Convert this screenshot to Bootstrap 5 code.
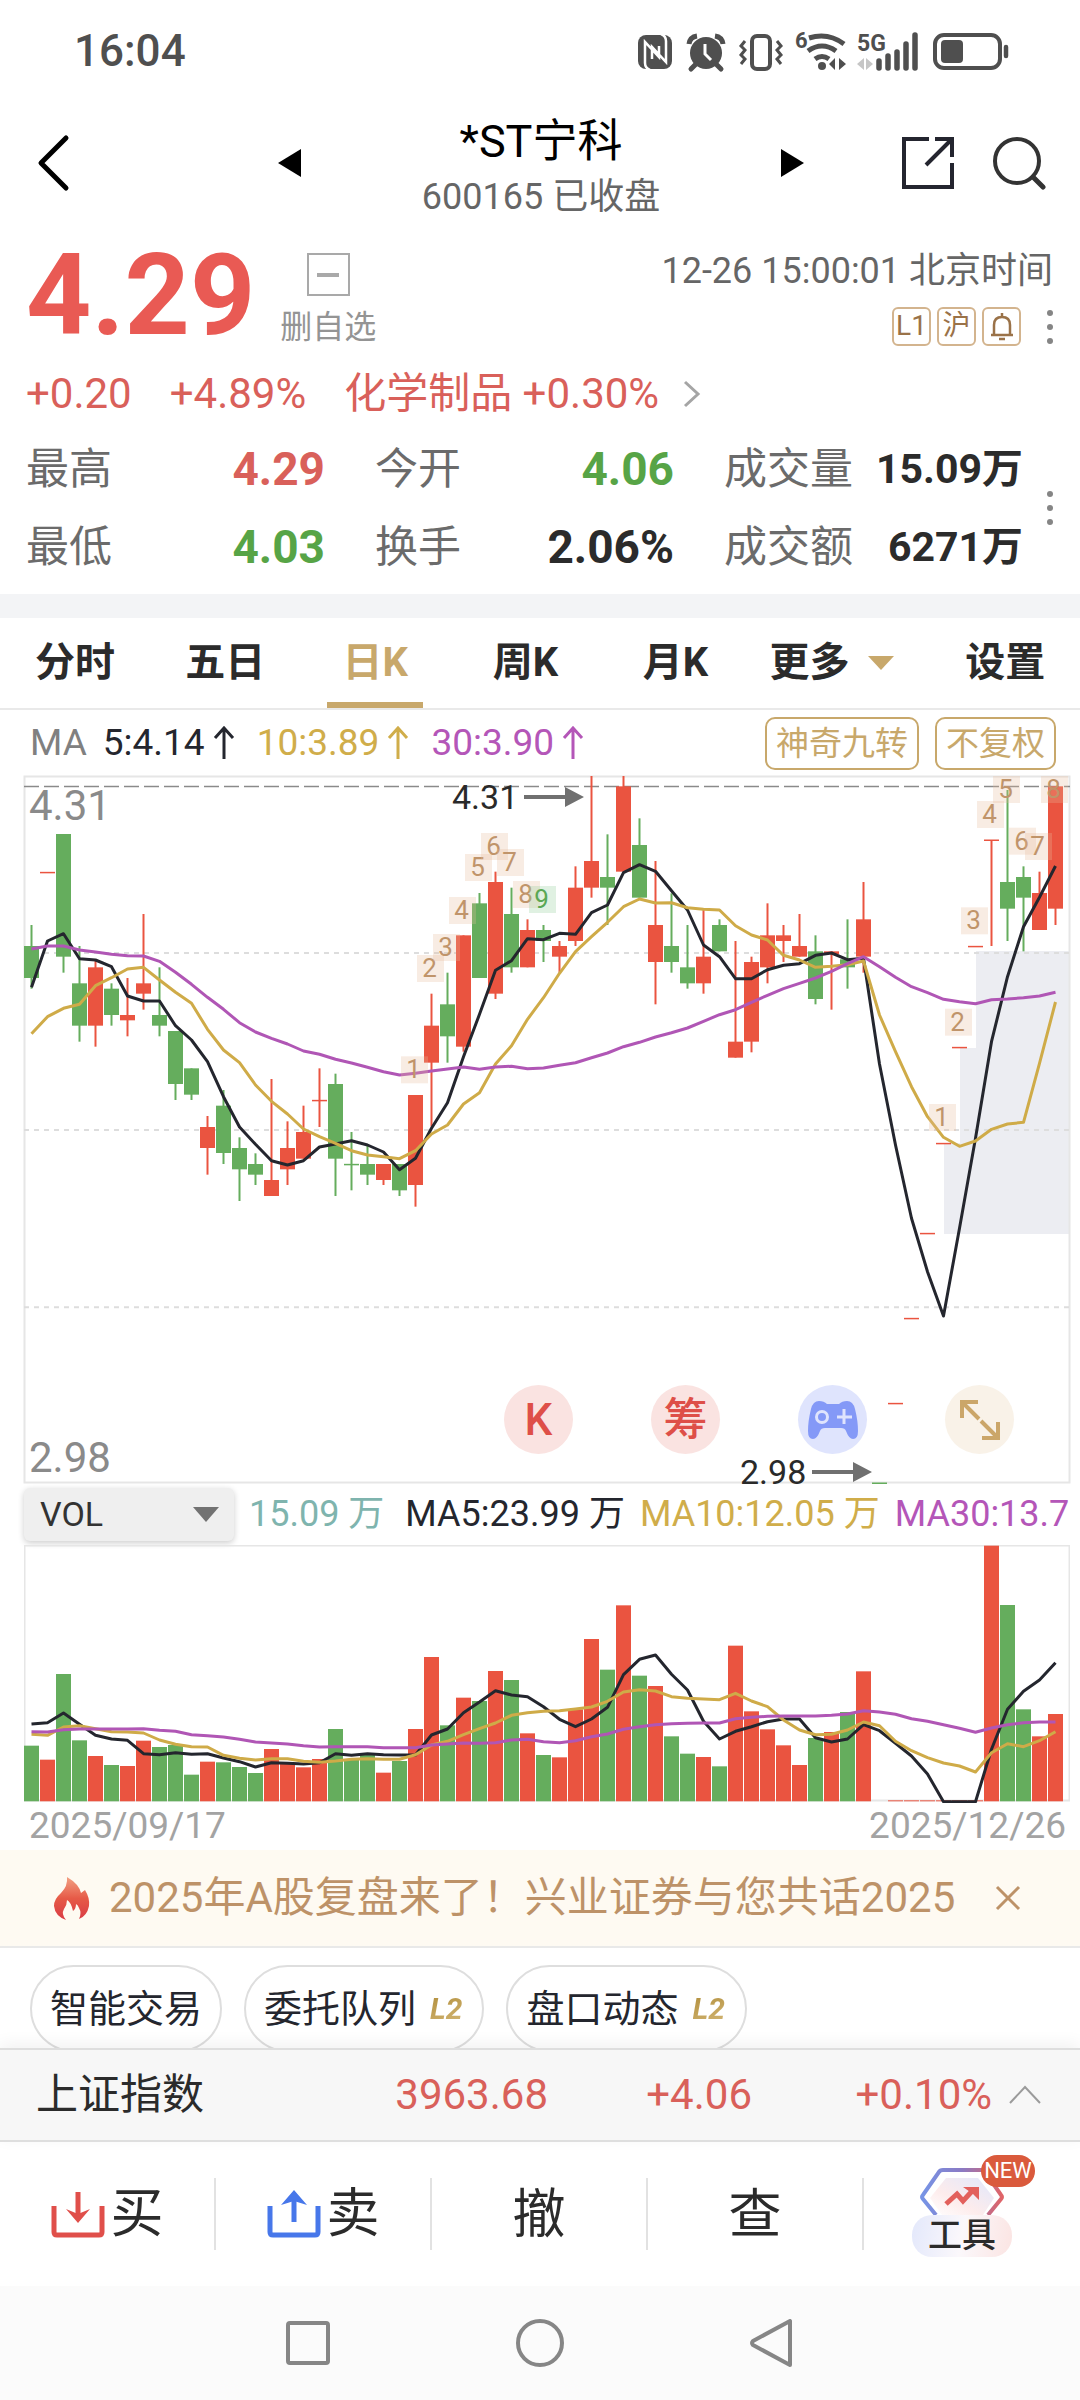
<!DOCTYPE html>
<html lang="zh-CN">
<head>
<meta charset="utf-8">
<meta name="viewport" content="width=device-width, initial-scale=1">
<title>*ST宁科 600165</title>
<link rel="stylesheet" href="https://cdn.jsdelivr.net/npm/bootstrap@5.3.0/dist/css/bootstrap.min.css">
<style>
:root{--up:#d9605a;--down:#57a446;--gold:#c8a86b;--ink:#2b2b2b;--line:#e9e9e9}
body{font-family:Roboto,"Noto Sans CJK SC",sans-serif;background:#fff;color:var(--ink);font-size:42px;line-height:50px}
button{background:none;border:0;padding:0;color:inherit;line-height:inherit;font-weight:inherit}
a,a:hover{color:inherit;text-decoration:none}
svg{display:block;flex:none}
.statusbar{height:105px;padding:0 65px 3px 74px;font-size:44px;font-weight:500;color:#4f4f4f}
.stockbar{height:135px;padding:0 33px 20px 35px}
.stockbar .side{flex:1 1 0;gap:36px}
.switcher{width:528px}
.stock-title{font-size:45px;line-height:50px;color:#000;margin:8px 0 10px;font-weight:400}
.stock-code{font-size:36px;line-height:40px;color:#666}
.quote{padding:13px 27px 22px 26px}
.price{font-size:114px;line-height:84px;font-weight:700;color:#e95a54}
.unwatch{margin-left:25px;font-size:32px;line-height:34px;color:#949494}
.unwatch .minus{width:43px;height:43px;border:2px solid #a9a9a9;margin-bottom:14px}
.minus::after{content:"";width:22px;height:4px;background:#a9a9a9}
.stamp{font-size:36px;line-height:36px;color:#666;margin-bottom:18px}
.tagbox{width:39px;height:39px;border:2px solid #d3b48e;border-radius:6px;font-size:28px;line-height:34px;color:#9a7248}
.dots{width:6px;gap:8px}
.dots i{width:6px;height:6px;border-radius:50%;background:#858585}
.tagrow{gap:6px}
.tagrow .dots{margin-left:20px}
.change{line-height:44px;margin-top:26px;color:var(--up);gap:38px}
.change a{gap:24px}
.stats{margin-top:28px}
.stats .rows{gap:28px}
.stats .items{gap:50px;flex:1}
.stats .pair{flex:1 1 0}
.stats .tag{font-size:43px;color:#6b6b6b}
.stats .val{font-size:46px;font-weight:700}
.stats .val-s{font-size:41px;font-weight:700}
.up{color:var(--up)}.down{color:var(--down)}
.band{height:24px;background:#f3f4f6}
.periods{border-bottom:2px solid var(--line);height:92px;font-size:40px;font-weight:700}
.periods button{flex:0 0 13.9%;height:90px;position:relative}
.periods .more{flex-basis:15%;gap:18px}
.periods .setup{flex:1;padding-left:18px}
.periods .on{color:var(--gold)}
.periods .on::after{content:"";position:absolute;left:50%;bottom:0;width:96px;height:6px;margin-left:-48px;background:var(--gold)}
.tri{border:13px solid transparent;border-top:14px solid var(--gold);border-bottom:0}
.ma{height:66px;padding:0 24px 0 30px;font-size:37px;gap:22px}
.ma .grey{color:#808080;margin-right:16px}
.ma .opts{gap:16px}
.ma .opt{font-size:33px;line-height:49px;border:2px solid var(--gold);border-radius:10px;color:var(--gold);padding:0 9px}
.c5{color:#24262e}.c10{color:#d0ad4a}.c30{color:#b456b8}
.plot{margin:0 10px 0 24px;position:relative}
.plot>svg{width:100%;height:auto}
.tools{position:absolute;right:56px;bottom:29px;gap:78px}
.tools button{width:69px;height:69px;border-radius:50%;font-size:44px}
.tools .red{background:#fae3e1;color:#de4f48;font-weight:500}
.tools .blue{background:#dfe4fd}
.tools .sand{background:#f9f2e8}
.volbar{height:62px;margin:0 8px 0 24px;font-size:36px;gap:15px;white-space:nowrap}
.volsel{position:relative;width:210px;height:53px;flex:none}
.volsel select{appearance:none;width:100%;height:53px;border:0;border-radius:6px;background:#efefef;font-size:34px;color:#333;padding:0 16px;box-shadow:0 2px 6px #0003}
.volsel::after{content:"";position:absolute;right:15px;top:19px;border:13px solid transparent;border-top:15px solid #727272;border-bottom:0;pointer-events:none}
.volbar .teal{color:#7fb4ae;margin-right:6px}
.dates{height:47px;padding:0 14px 0 29px;font-size:37px;color:#a3a3a3;line-height:46px}
.promo{height:98px;background:#fefaf2;border-bottom:2px solid var(--line);padding:0 58px 0 52px;color:#bd9268}
.promo a{margin-left:17px}
.chips{height:100px;overflow:hidden;padding:17px 30px 0;gap:22px}
.chips button{flex:none;height:87px;border:2px solid #dedede;border-radius:44px;font-size:38px;padding:0 18px;color:#24262e;gap:14px}
.lv2{font-size:30px;font-weight:700;font-style:italic;color:transparent;background:linear-gradient(160deg,#a9852f,#dcc082);-webkit-background-clip:text;background-clip:text;padding-right:2px}
.indexbar{height:94px;background:#f7f7f7;border-top:2px solid #dedede;border-bottom:2px solid #dedede;padding:0 38px 0 36px;box-shadow:0 -4px 16px #0000000f;position:relative}
.indexbar .nm{flex:1 1 0}
.indexbar .w1{width:180px}.indexbar .w2{width:204px}.indexbar .w3{width:240px}
.indexbar svg{margin-left:16px}
.trade{height:144px}
.trade>button{flex:0 0 20%;height:72px;border-right:2px solid #e2e2e2;font-size:53px;line-height:74px;gap:6px}
.trade>.kitcell{border:0;padding-right:20px}
.kit{position:relative;width:100px;height:102px;margin-bottom:16px}
.kit .cap{width:100px;height:42px;border-radius:20px;font-size:34px;line-height:40px;font-weight:500;background:linear-gradient(100deg,#e3e8fb,#fbf8fb 50%,#fbe4e2)}
.kit .new{position:absolute;left:69px;top:0;width:54px;height:32px;border-radius:16px;background:#da5a3c;color:#fff;font-size:22px;line-height:32px}
.kit .hex{margin:13px auto 0}
.sysnav{height:114px;background:#fbfbfb;gap:186px}
</style>
</head>
<body>
<div class="statusbar d-flex align-items-center justify-content-between">
  <span>16:04</span>
  <svg width="380" height="56" viewBox="635 22 380 56" fill="#4f4f4f" aria-hidden="true">
    <rect x="638" y="34" width="34" height="34" rx="8"/>
    <path d="M650 69Q645 67 645 62V41L659 56V45M661 33Q666 35 666 40V61L652 46V58" fill="none" stroke="#fff" stroke-width="2.500"/>
    <circle cx="706" cy="52" r="16"/><path d="M696 63l-5 5M716 63l5 5" stroke="#4f4f4f" stroke-width="5" stroke-linecap="round"/>
    <path d="M689 43q1-7 8-8M723 43q-1-7-8-8" fill="none" stroke="#4f4f4f" stroke-width="5"/>
    <path d="M705 43v10l6 6" fill="none" stroke="#fff" stroke-width="3"/>
    <rect x="752" y="35" width="18" height="33" rx="5" fill="none" stroke="#4f4f4f" stroke-width="4"/>
    <path d="M745 40l-4 5 4 4-4 5 4 4-4 5M777 40l4 5-4 4 4 5-4 4 4 5" fill="none" stroke="#4f4f4f" stroke-width="3"/>
    <text x="795" y="47" font-size="22" font-weight="700">6</text>
    <path d="M809 37Q828 31 844 43M808 50Q822 40 836 50M815 58Q822 53 829 58" fill="none" stroke="#4f4f4f" stroke-width="5"/>
    <circle cx="822" cy="65" r="4"/>
    <path d="M835 57v12l-6-6zM839 69V57l7 6z"/>
    <text x="857" y="50" font-size="23" font-weight="700">5G</text>
    <path d="M864 57v12l-7-6zM866 69V57l7 6z" fill="#c6c6c6"/>
    <path d="M879 60v7M888 55v12M897 51v16M906 43v24M915 34v33" stroke="#4f4f4f" stroke-width="5.500" stroke-linecap="round"/>
    <rect x="935" y="34" width="65" height="33" rx="9" fill="none" stroke="#4f4f4f" stroke-width="4"/>
    <rect x="941" y="39" width="22" height="23" rx="4"/><path d="M1006 46v9" stroke="#4f4f4f" stroke-width="4.500" stroke-linecap="round"/>
  </svg>
</div>

<header class="stockbar d-flex align-items-center">
  <div class="side d-flex"><button aria-label="返回"><svg width="36" height="60" viewBox="0 0 36 60" fill="none" stroke="#000" stroke-width="5" stroke-linecap="round" stroke-linejoin="round"><path d="M31 5L6 30l25 25"/></svg></button></div>
  <div class="switcher d-flex align-items-center justify-content-between">
    <button aria-label="上一只"><svg width="24" height="28" viewBox="0 0 24 28"><path d="M24 0v28L1 14z"/></svg></button>
    <div class="text-center"><h1 class="stock-title">*ST宁科</h1><div class="stock-code">600165 已收盘</div></div>
    <button aria-label="下一只"><svg width="24" height="28" viewBox="0 0 24 28"><path d="M0 0v28l23-14z"/></svg></button>
  </div>
  <div class="side d-flex justify-content-end align-items-center">
    <button aria-label="分享"><svg width="54" height="54" viewBox="0 0 54 54" fill="none" stroke="#24252f" stroke-width="4"><path d="M28 3H3v48h48V27M34 3h17v18M51 3L25 29"/></svg></button>
    <button aria-label="搜索"><svg width="56" height="54" viewBox="0 0 56 54" fill="none" stroke="#333" stroke-width="4"><circle cx="26" cy="25" r="22"/><path d="M42 41l10 10" stroke-width="5" stroke-linecap="round"/></svg></button>
  </div>
</header>

<main>
<section class="quote">
  <div class="d-flex align-items-start">
    <div class="price">4.29</div>
    <button class="unwatch d-flex flex-column align-items-center"><span class="minus d-flex align-items-center justify-content-center"></span>删自选</button>
    <div class="ms-auto d-flex flex-column align-items-end">
      <div class="stamp">12-26 15:00:01 北京时间</div>
      <div class="tagrow d-flex align-items-center">
        <span class="tagbox text-center">L1</span><span class="tagbox text-center">沪</span>
        <button class="tagbox d-flex align-items-center justify-content-center" aria-label="提醒"><svg width="26" height="29" viewBox="0 0 26 29" fill="none" stroke="#9a7248" stroke-width="2.500"><path d="M2 23h22M5 23V13q0-8 8-8t8 8v10M13 1v4M10 27h6"/></svg></button>
        <span class="dots d-flex flex-column"><i></i><i></i><i></i></span>
      </div>
    </div>
  </div>
  <div class="change d-flex align-items-center">
    <span>+0.20</span><span>+4.89%</span>
    <a href="#" class="d-flex align-items-center">化学制品 +0.30%<svg width="18" height="28" viewBox="0 0 18 28" fill="none" stroke="#a5a5a5" stroke-width="3"><path d="M2 2l13 12L2 26"/></svg></a>
  </div>
  <div class="stats d-flex align-items-center">
    <div class="rows d-flex flex-column flex-fill">
      <div class="items d-flex">
        <div class="pair d-flex justify-content-between"><span class="tag">最高</span><span class="val up">4.29</span></div>
        <div class="pair d-flex justify-content-between"><span class="tag">今开</span><span class="val down">4.06</span></div>
        <div class="pair d-flex justify-content-between text-nowrap"><span class="tag">成交量</span><span class="val-s">15.09万</span></div>
      </div>
      <div class="items d-flex">
        <div class="pair d-flex justify-content-between"><span class="tag">最低</span><span class="val down">4.03</span></div>
        <div class="pair d-flex justify-content-between"><span class="tag">换手</span><span class="val">2.06%</span></div>
        <div class="pair d-flex justify-content-between text-nowrap"><span class="tag">成交额</span><span class="val-s">6271万</span></div>
      </div>
    </div>
    <span class="dots d-flex flex-column ms-4"><i></i><i></i><i></i></span>
  </div>
</section>
<div class="band"></div>

<nav class="periods d-flex">
  <button>分时</button><button>五日</button><button class="on">日K</button><button>周K</button><button>月K</button>
  <button class="more d-flex align-items-center justify-content-center">更多<span class="tri"></span></button>
  <button class="setup">设置</button>
</nav>

<div class="ma d-flex align-items-center">
  <span class="c5 d-flex align-items-center"><span class="grey">MA</span>5:4.14<svg class="ms-2" width="22" height="34" viewBox="0 0 22 34" fill="none" stroke="currentColor" stroke-width="3"><path d="M11 33V2M2 12l9-10 9 10"/></svg></span>
  <span class="c10 d-flex align-items-center">10:3.89<svg class="ms-2" width="22" height="34" viewBox="0 0 22 34" fill="none" stroke="currentColor" stroke-width="3"><path d="M11 33V2M2 12l9-10 9 10"/></svg></span>
  <span class="c30 d-flex align-items-center">30:3.90<svg class="ms-2" width="22" height="34" viewBox="0 0 22 34" fill="none" stroke="currentColor" stroke-width="3"><path d="M11 33V2M2 12l9-10 9 10"/></svg></span>
  <span class="opts d-flex ms-auto"><button class="opt">神奇九转</button><button class="opt">不复权</button></span>
</div>

<div class="plot">
  <svg id="kline" viewBox="24 776 1046 707" overflow="visible" role="img" aria-label="日K线"></svg>
  <div class="tools d-flex">
    <button class="red">K</button>
    <button class="red">筹</button>
    <button class="blue d-flex align-items-center justify-content-center" aria-label="模拟训练"><svg width="52" height="40" viewBox="0 0 52 40"><path d="M12 1q5 0 8 3h12q3-3 8-3 6 0 8 8 3 12 3 22 0 8-5 8-4 0-7-8-1-3-5-3H18q-4 0-5 3-3 8-7 8-5 0-5-8Q1 21 4 9q2-8 8-8z" fill="#8499f7"/><circle cx="15" cy="17" r="5.500" fill="none" stroke="#dfe4fd" stroke-width="3"/><path d="M37 9v15M30 17h15" stroke="#dfe4fd" stroke-width="3"/></svg></button>
    <button class="sand d-flex align-items-center justify-content-center" aria-label="全屏"><svg width="42" height="42" viewBox="0 0 42 42" fill="none" stroke="#cba669" stroke-width="4"><path d="M3 19V3h16M3 3l17 17M39 23v16H23M39 39L22 22"/></svg></button>
  </div>
</div>

<div class="volbar d-flex align-items-center">
  <div class="volsel"><select aria-label="副图指标"><option>VOL</option><option>MACD</option><option>KDJ</option></select></div>
  <span class="teal">15.09 万</span><span class="c5">MA5:23.99 万</span><span class="c10">MA10:12.05 万</span><span class="c30">MA30:13.7</span>
</div>
<div class="plot"><svg id="volume" viewBox="24 1545 1046 258" role="img" aria-label="成交量"></svg></div>
<div class="dates d-flex justify-content-between"><span>2025/09/17</span><span>2025/12/26</span></div>

<div class="promo d-flex align-items-center">
  <svg width="40" height="44" viewBox="0 0 40 44"><defs><linearGradient id="fl" x1="0" y1="0" x2="0" y2="1"><stop offset="0" stop-color="#f2a184"/><stop offset=".5" stop-color="#e65a47"/><stop offset="1" stop-color="#d93a45"/></linearGradient></defs><path d="M15 1q12 7 14 16l4-3q5 8 4 16-2 10-10 13 3-6 0-11-1-3-3-4 0 5-3 7-2-9-6-11 0 5-3 9-3 5 2 11Q3 40 2 30q0-7 7-13Q16 10 15 1z" fill="url(#fl)"/></svg>
  <a href="#" class="text-nowrap">2025年A股复盘来了！兴业证券与您共话2025</a>
  <button class="ms-auto" aria-label="关闭"><svg width="28" height="28" viewBox="0 0 28 28" fill="none" stroke="#bd9268" stroke-width="3"><path d="M3 3l22 22M25 3L3 25"/></svg></button>
</div>

<div class="chips d-flex">
  <button>智能交易</button>
  <button class="d-flex align-items-center">委托队列<span class="lv2">L2</span></button>
  <button class="d-flex align-items-center">盘口动态<span class="lv2">L2</span></button>
</div>
</main>

<footer>
  <div class="indexbar d-flex align-items-center">
    <span class="nm">上证指数</span><span class="up text-end w1">3963.68</span><span class="up text-end w2">+4.06</span><span class="up text-end w3">+0.10%</span>
    <svg width="34" height="20" viewBox="0 0 34 20" fill="none" stroke="#9b9b9b" stroke-width="2"><path d="M2 18L17 2l15 16"/></svg>
  </div>
  <div class="trade d-flex align-items-center">
    <button class="d-flex align-items-center justify-content-center"><svg width="54" height="50" viewBox="0 0 54 50" fill="none" stroke="#e04f4a" stroke-width="5"><path d="M3 17v26q0 3 3 3h42q3 0 3-3V17M27 3v25"/><path d="M15 20l12 14 12-14-12 5z" fill="#e04f4a" stroke="none"/></svg>买</button>
    <button class="d-flex align-items-center justify-content-center"><svg width="54" height="50" viewBox="0 0 54 50" fill="none" stroke="#4777ea" stroke-width="5"><path d="M3 17v26q0 3 3 3h42q3 0 3-3V17M27 33V8"/><path d="M14 16L27 1l13 15-13-4z" fill="#4777ea" stroke="none"/></svg>卖</button>
    <button>撤</button>
    <button>查</button>
    <button class="kitcell d-flex align-items-center justify-content-center"><span class="kit"><span class="new">NEW</span><svg class="hex" width="84" height="47" viewBox="0 0 84 47" fill="none"><defs><linearGradient id="hx"><stop offset="0" stop-color="#7694e6"/><stop offset=".5" stop-color="#8b7ac4"/><stop offset="1" stop-color="#e06467"/></linearGradient><linearGradient id="hf" x1="1" y1="0" x2="0" y2="1"><stop offset="0" stop-color="#e0e7fc"/><stop offset=".6" stop-color="#fdecec"/><stop offset="1" stop-color="#fff"/></linearGradient></defs><path d="M26 10h32l16 20-11 17H22L10 30z" fill="url(#hf)"/><path d="M16 47L3 31q-2-2 0-4L19 4q1-2 4-2h38q3 0 4 2l16 23q2 2 0 4L68 47" stroke="url(#hx)" stroke-width="4"/><path d="M26 36l11-10 6 7 11-12" stroke="#e2605c" stroke-width="5"/><path d="M43 19h16v13l-6-6z" fill="#e2605c"/></svg><span class="cap d-block">工具</span></span></button>
  </div>
  <div class="sysnav d-flex align-items-center justify-content-center">
    <button aria-label="最近任务"><svg width="44" height="44" viewBox="0 0 44 44" fill="none" stroke="#868686" stroke-width="4"><rect x="2" y="2" width="40" height="40" rx="2"/></svg></button>
    <button aria-label="主屏幕"><svg width="48" height="48" viewBox="0 0 48 48" fill="none" stroke="#868686" stroke-width="4"><circle cx="24" cy="24" r="22"/></svg></button>
    <button aria-label="后退"><svg width="44" height="48" viewBox="0 0 44 48" fill="none" stroke="#868686" stroke-width="4" stroke-linejoin="round"><path d="M40 2v44L3 26q-2-2 0-4z"/></svg></button>
  </div>
</footer>

<script src="https://cdn.jsdelivr.net/npm/bootstrap@5.3.0/dist/js/bootstrap.bundle.min.js"></script>
<script>
const UP='#ea5440', DN='#65ad5d';
const cx=i=>31.5+16*i;
// trading days: direction, high, body top, body bottom, low
const days=`G495,558,654,686 R337,337,337,337 G222,222,590,638 G558,670,797,845 R600,622,797,860 G670,686,765,797 R654,765,781,829 R462,670,701,749 G622,765,797,829 G813,813,972,1020 G925,925,1004,1020 R1068,1101,1164,1244 G990,1037,1179,1212 G1132,1164,1228,1323 G1180,1212,1244,1275 R957,1260,1308,1308 R1084,1164,1228,1275 R1037,1116,1196,1196 R925,1021,1021,1101 G941,972,1196,1308 G1116,1213,1213,1291 G1155,1212,1244,1275 R1212,1212,1260,1275 G1212,1212,1291,1308 R1005,1005,1275,1340 R701,797,908,1100 G638,733,829,908 R526,526,860,875 G399,430,654,654 R335,366,701,717 G383,462,622,638 R478,510,622,622 G495,510,543,606 R543,558,590,638 R319,383,543,558 R48,303,383,413 G223,351,383,495 R48,79,335,335 G175,255,413,413 R303,495,606,733 G400,558,606,638 G495,622,670,686 R450,590,670,701 G478,495,574,574 R543,845,893,893 R590,606,845,877 R430,526,622,670 R495,526,543,606 R462,558,590,590 G526,574,717,733 R574,574,582,749 G478,598,622,686 R366,478,590,638 G2169,2169,2169,2169 R1930,1930,1930,1930 R1675,1675,1675,1675 R1420,1420,1420,1420 R1150,1150,1150,1150 R862,862,862,862 R559,559,559,559 R240,240,240,558 G90,366,446,543 G319,351,413,574 R335,399,510,510 R79,79,446,495`.split(' ');
const ma={
 '#24262e':[682,543,521,596,600,620,708,723,723,797,840,905,1010,1101,1153,1202,1215,1202,1161,1152,1142,1155,1176,1229,1195,1105,1028,890,763,631,602,536,539,520,523,458,435,338,314,334,392,450,555,590,656,656,629,616,611,586,579,599,595,912,1155,1375,1535,1668,1405,1135,845,650,500,412,318],
 '#cfab48':[821,770,745,733,677,653,627,622,660,697,730,808,870,908,975,1024,1062,1107,1130,1150,1172,1185,1190,1196,1172,1122,1095,1032,998,912,857,778,713,640,575,530,487,440,417,429,428,443,448,450,497,525,540,586,600,622,619,614,603,765,875,980,1070,1132,1159,1143,1108,1092,1087,910,726],
 '#b056b5':[567,558,558,570,576,583,587,588,604,637,673,712,748,788,816,835,852,873,883,898,909,922,935,945,940,933,927,921,928,921,919,926,924,916,908,893,879,860,847,831,818,804,784,764,749,727,706,686,670,654,634,611,590,620,652,680,698,718,725,731,719,717,713,708,697]};
const marks=[[24,1,889],[25,2,585],[26,3,522],[27,4,411],[28,5,282],[29,6,219],[30,7,267],[31,8,363],[32,9,378],[57,1,1032],[58,2,746],[59,3,442],[60,4,123],[61,5,48],[62,6,203],[63,7,219],[64,8,48]];
const y=v=>760+v/3;
const line=(a,f,c)=>`<polyline points="${a.map((v,i)=>cx(i)+','+f(v).toFixed(1)).join(' ')}" fill="none" stroke="${c}" stroke-width="3" stroke-linejoin="round"/>`;
let s='<path d="M976 951H1070V1234H944V1143H960V1048H976Z" fill="#ecedf2"/>';
s+='<rect x="24.500" y="776.500" width="1045" height="706" fill="none" stroke="#e6e6e6" stroke-width="2"/>';
[579,1110,1642].forEach(v=>s+=`<path d="M24 ${y(v)}H1070" stroke="#dddddd" stroke-width="2" stroke-dasharray="5 5"/>`);
s+=`<path d="M24 786.500H1070" stroke="#8a8a8a" stroke-width="1.500" stroke-dasharray="15 5"/>`;
s+='<g font-size="42" fill="#8a8a8a"><text x="29" y="820">4.31</text><text x="29" y="1472">2.98</text></g>';
days.forEach((d,i)=>{const c=d[0]=='R'?UP:DN,[h,t,b,l]=d.slice(1).split(',').map(v=>y(+v)),flat=b-t<1;
 s+=`<path d="M${cx(i)} ${h}V${l}" stroke="${c}" stroke-width="2"/><rect x="${cx(i)-7.5}" y="${flat?t-.5:t}" width="15" height="${flat?1.5:b-t}" fill="${c}"/>`});
for(const c in ma)s+=line(ma[c],y,c);
marks.forEach(([i,n,v])=>{const g=n==9;s+=`<rect x="${cx(i)-14.5}" y="${y(v)}" width="27" height="27" fill="${g?'#8fce97':'#e5b99a'}" fill-opacity=".28"/><text x="${cx(i)-2}" y="${y(v)+22}" font-size="26" text-anchor="middle" fill="${g?'#5aa854':'#c0946a'}">${n}</text>`});
s+='<g font-size="34" fill="#2a2a2a"><text x="452" y="809">4.31</text><text x="740" y="1484">2.98</text></g><g fill="#707070"><path d="M524 795h41v-8l19 10-19 10v-8h-41zM812 1470h41v-8l19 10-19 10v-8h-41z"/></g>';
document.getElementById('kline').innerHTML=s;

// volume bars: direction and top
const vol='G797 R839 G582 G781 R828 G855 R858 R782 G801 G795 G884 R845 G847 G861 G879 R807 R850 R862 R837 G747 G840 G822 R878 G843 R747 R531 G736 R653 G663 R573 G600 R760 G825 R832 R688 R477 G569 R376 G587 R618 G769 G821 R831 G859 R497 R694 R748 R796 R855 G774 R756 G696 R574 G964 R961 R961 R961 R961 R961 R961 R197 G375 G688 R769 R702'.split(' ');
const vma={
 '#24262e':[732,728,699,733,766,777,781,821,824,818,823,821,834,845,861,848,850,852,848,821,826,821,824,825,825,765,747,698,666,632,645,650,680,718,740,717,682,584,538,525,583,630,724,777,754,740,725,717,717,773,786,777,734,752,790,828,882,965,965,965,808,688,634,600,548],
 '#cfab48':[763,766,741,737,746,755,756,759,780,793,800,801,826,835,840,836,836,844,847,843,838,836,838,838,824,795,784,764,746,729,706,698,694,692,687,681,664,636,629,633,650,655,657,659,640,663,680,720,750,764,763,750,726,737,784,812,833,849,858,876,818,791,800,782,755],
 '#b056b5':[755,756,749,747,747,747,747,746,751,754,764,767,771,778,786,789,792,797,801,800,800,800,803,803,803,795,792,789,790,788,780,778,785,788,782,770,762,748,740,734,731,730,729,729,716,712,709,708,708,708,706,702,692,696,703,716,724,734,745,757,744,734,728,726,726]};
const w=v=>1480+v/3;
let q='<rect x="24.500" y="1545.500" width="1045" height="255" fill="none" stroke="#e6e6e6" stroke-width="2"/>';
vol.forEach((d,i)=>{const t=w(+d.slice(1));q+=`<rect x="${cx(i)-7.5}" y="${t}" width="15" height="${1801.3-t}" fill="${d[0]=='R'?UP:DN}"/>`});
for(const c in vma)q+=line(vma[c],w,c);
document.getElementById('volume').innerHTML=q;
</script>
</body>
</html>
